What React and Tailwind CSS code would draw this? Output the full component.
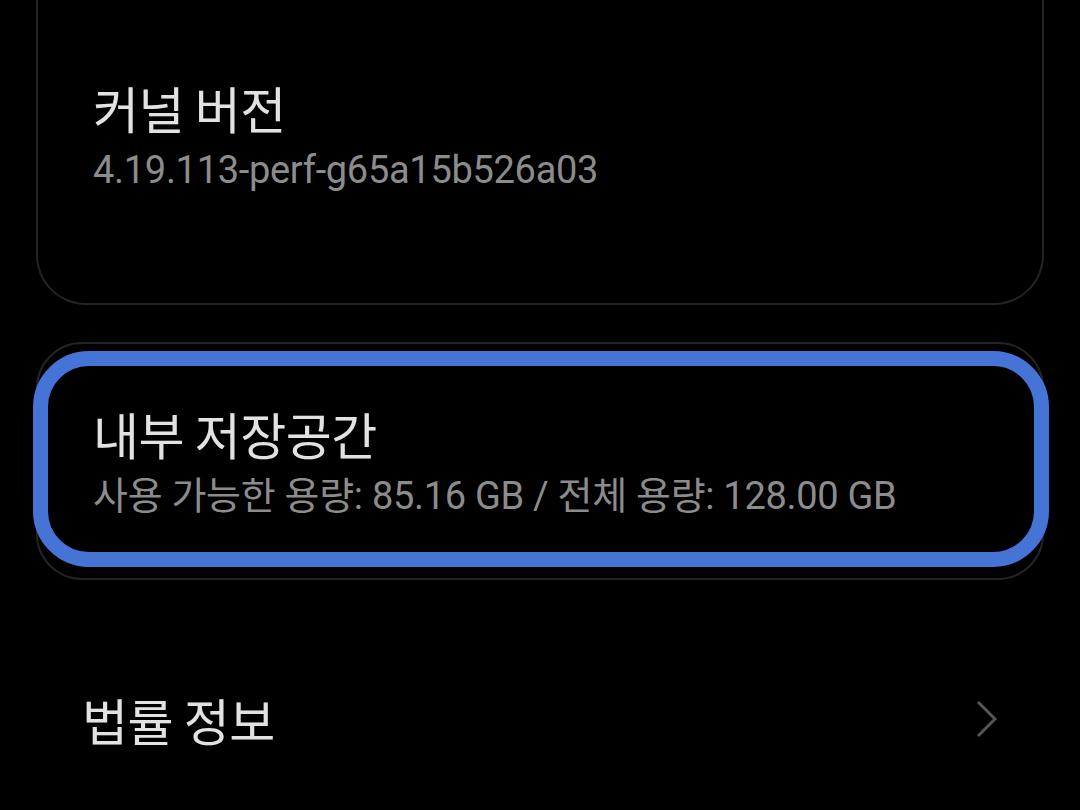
const kr = { fontFamily: '"Noto Sans CJK KR", "Noto Sans", sans-serif' };

function InfoCard({ title, value, className = '', children }) {
  return (
    <div className={`relative mx-9 border-2 border-[#232323] ${className}`}>
      {children}
      <div className="relative px-[55px]">
        <div className="text-[50px] leading-[62px] text-[#e2e2e2] tracking-[-0.5px]">{title}</div>
        <div
          className="mt-[10px] text-[38px] leading-[44px] text-[#8c8c8c] tracking-[-0.3px]"
          style={{ fontFamily: 'Roboto, "Noto Sans CJK KR", sans-serif' }}
        >
          {value}
        </div>
      </div>
    </div>
  );
}

export default function App() {
  return (
    <div className="w-[1080px] h-[810px] overflow-hidden bg-black" style={kr}>
      {/* kernel card, top cut off by the viewport */}
      <InfoCard
        title="커널 버전"
        value="4.19.113-perf-g65a15b526a03"
        className="-mt-[40px] pt-[116px] pb-[111px] border-t-0 rounded-b-[50px]"
      />

      {/* storage card with focus ring */}
      <InfoCard
        title="내부 저장공간"
        value="사용 가능한 용량: 85.16 GB / 전체 용량: 128.00 GB"
        className="mt-[37px] h-[238px] pt-[58px] rounded-[46px]"
      >
        <div className="absolute -left-[5px] -right-[7px] top-[7px] bottom-[11px] rounded-[56px] border-[15px] border-[#4573d6]" />
      </InfoCard>

      {/* legal info row */}
      <div className="flex items-center justify-between pl-[82px] pr-[82px] mt-[108px]">
        <span className="text-[50px] leading-[62px] text-[#e2e2e2] tracking-[-0.5px]">법률 정보</span>
        <svg width="22" height="38" viewBox="0 0 22 38" fill="none" className="text-[#555555]">
          <polyline points="2,2 19,19 2,36" stroke="currentColor" strokeWidth="3" strokeLinejoin="miter" />
        </svg>
      </div>
    </div>
  );
}
